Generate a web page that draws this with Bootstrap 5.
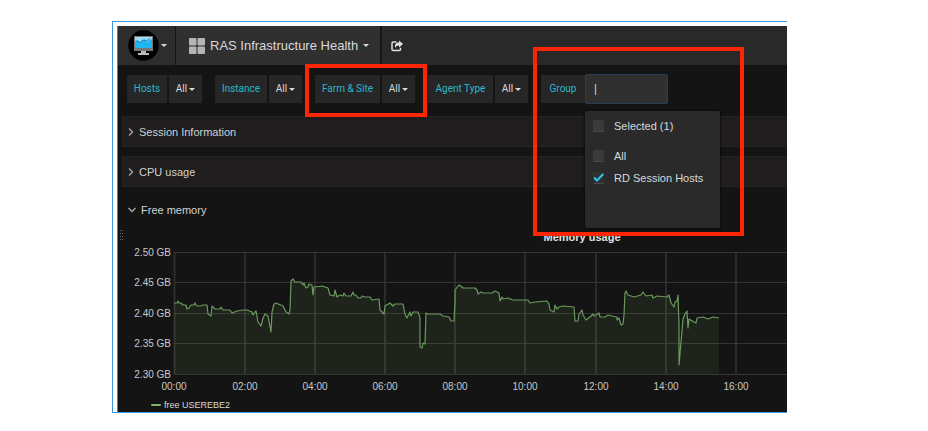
<!DOCTYPE html>
<html lang="en">
<head>
<meta charset="utf-8">
<meta name="viewport" content="width=device-width, initial-scale=1">
<title>RAS Infrastructure Health</title>
<link href="https://cdn.jsdelivr.net/npm/bootstrap@5.3.0/dist/css/bootstrap.min.css" rel="stylesheet">
<style>
body{background:#fff;font-family:"Liberation Sans",Arial,sans-serif;font-size:11px;line-height:16px;color:#d2d3d4}
.page-shell{padding:21px 141px 18px 112px}
.shot-frame{border:solid #3d96dc;border-width:1px 0 1px 1px;padding:4px 0 0 4px}
.dash{background:#141414;border-left:1px solid #777;overflow:hidden}
.topbar{height:39px;background:#292929}
.topbar button{border:0;color:#d8d9da;padding:0}
.brand-btn{width:58px;background:#2d2d2d;border-right:1px solid #141414!important;padding-left:10px!important;gap:2px}
.title-btn{width:206px;background:#303030;border-right:2px solid #161616!important;font-size:13px;gap:5px;padding-left:13px!important}
.share-btn{width:30px;background:transparent}
.caret{width:0;height:0;border:solid transparent;border-width:3px 3px 0;border-top-color:#d8d9da;flex:none}
.caret.tiny{border-width:3px 3px 0;border-top-color:#d8d9da}
.filters{padding:10px 8px 12px 9px;height:51px;gap:13px;font-family:Roboto,sans-serif;font-size:10px}
.flt{gap:2px;height:28px}
.flt label,.flt button{background:#262626;display:flex;align-items:center;justify-content:center;height:28px}
.flt label{color:#2ab9ca}
.flt button{border:0;color:#d8d9da;width:33px;gap:2px;padding:0;font-size:10px}
.w-a{width:40px}.w-b{width:52px}.w-c{width:65px}.w-d{width:44px}
.callout{position:absolute;border:4px solid #fc2605;pointer-events:none;z-index:6}
.callout-site{inset:-11px -12px -14px -10px}
.callout-group{left:-8px;top:-28px;width:211px;height:189px}
.group-input{width:83px;height:30px;margin-top:-1px;background:#303030;border:1px solid #24405a;border-radius:2px;color:#d8d9da;padding:0 8px;font-size:12px;outline:0}
.menu-pop{position:absolute;left:44px;top:36px;width:135px;height:117px;background:#2a2a2a;border-radius:2px;z-index:5;padding:7px 8px;font-family:"Liberation Sans",Arial,sans-serif;font-size:11px;box-shadow:0 0 3px #000}
.menu-pop .opt{display:flex;align-items:center;gap:10px;height:16px;background:none;color:#d8d9da}
.menu-pop label{display:block;background:none;color:#d8d9da;height:16px;white-space:nowrap}
.menu-pop input{appearance:none;margin:0;width:11px;height:12px;background:#3a3a3c;border-bottom:1px solid #4b4b4b;border-radius:1px;flex:none}
.menu-pop input:checked{background:#303030 url("data:image/svg+xml,%3Csvg xmlns='http://www.w3.org/2000/svg' viewBox='0 0 11 11'%3E%3Cpath d='M1 5.5l3 3L10.300 2' fill='none' stroke='%2333c5e8' stroke-width='2'/%3E%3C/svg%3E")}
.opt-all{margin-top:14px}.opt-rd{margin-top:6px}
.sections{gap:9px}
.sec{margin-left:4px;height:31px;background:#1f1d1d;border:1px solid #252323;border-right:0;color:#d2d3d4;padding:0 5px;gap:5px;text-align:left;font-size:11px}
.sec-open{background:transparent;border-color:transparent;height:28px;gap:5px}
.sec svg{flex:none}
.chart{display:block;width:100%;height:188px}
.chart text{font-size:10px;fill:#c8c9ca}
.chart .cap{font-size:11px;font-weight:bold;fill:#e0e0e0}
.chart .key{font-size:9px;fill:#d8d9da}
</style>
<script src="https://cdn.jsdelivr.net/npm/bootstrap@5.3.0/dist/js/bootstrap.bundle.min.js"></script>
</head>
<body>
<main class="page-shell">
<div class="shot-frame"><div class="dash">
  <nav class="topbar d-flex" aria-label="Dashboard">
    <button class="brand-btn d-flex align-items-center" aria-label="Main menu">
      <svg width="31" height="31" viewBox="0 0 31 31"><circle cx="15.500" cy="15.500" r="15.200" fill="#000"/><path d="M6 6h19v15H6z" fill="#777"/><path d="M7 7h17v11H7z" fill="#1fb6f2"/><path d="M7 7h17v2l-3 1-2 2-2-3-3 1-2 2-2-2-3 1z" fill="#9edcf7"/><path d="M8 12l2-1 2 2 3-3 2 1 3-1 2-2" fill="none" stroke="#2787b8"/><path d="M13 21h5v2h3v2H10v-2h3z" fill="#bbb"/></svg>
      <span class="caret tiny"></span>
    </button>
    <button class="title-btn d-flex align-items-center">
      <svg width="16" height="16" viewBox="0 0 16 16" fill="#b5b5b5"><rect width="7.500" height="7.500" rx="1"/><rect x="8.500" width="7.500" height="7.500" rx="1"/><rect y="8.500" width="7.500" height="7.500" rx="1"/><rect x="8.500" y="8.500" width="7.500" height="7.500" rx="1"/></svg>
      <span class="text-nowrap">RAS Infrastructure Health</span><span class="caret"></span>
    </button>
    <button class="share-btn d-flex align-items-center justify-content-center" aria-label="Share">
      <svg width="12" height="12" viewBox="0 0 12 12"><path d="M5.500 2H2.300Q1 2 1 3.300v6Q1 10.600 2.300 10.600h5.900q1.300 0 1.300-1.300V7.800" fill="none" stroke="#e0e0e0" stroke-width="1.500"/><path d="M8 .5L12 4 8 7.500v-2C5.800 5.500 5 6.200 4.500 8 3 4.500 5 2.600 8 2.600z" fill="#e0e0e0"/></svg>
    </button>
  </nav>
  <div class="filters d-flex">
    <div class="flt d-flex"><label class="w-a" for="f1">Hosts</label><button id="f1">All<span class="caret tiny"></span></button></div>
    <div class="flt d-flex"><label class="w-b" for="f2">Instance</label><button id="f2">All<span class="caret tiny"></span></button></div>
    <div class="flt d-flex position-relative"><label class="w-c" for="f3">Farm &amp; Site</label><button id="f3">All<span class="caret tiny"></span></button><span class="callout callout-site"></span></div>
    <div class="flt d-flex"><label class="w-c" for="f4">Agent Type</label><button id="f4">All<span class="caret tiny"></span></button></div>
    <div class="flt d-flex gap-0 position-relative"><label class="w-d" for="f5">Group</label><input class="group-input" id="f5" type="text" value="|">
      <div class="menu-pop">
        <div class="opt"><input type="checkbox" id="o1"><label for="o1">Selected (1)</label></div>
        <div class="opt opt-all"><input type="checkbox" id="o2"><label for="o2">All</label></div>
        <div class="opt opt-rd"><input type="checkbox" id="o3" checked><label for="o3">RD Session Hosts</label></div>
      </div>
      <span class="callout callout-group"></span>
    </div>
  </div>
  <div class="sections d-flex flex-column">
    <button class="sec d-flex align-items-center"><svg width="6" height="8" viewBox="0 0 6 8"><path d="M1 .5L4.500 4 1 7.500" fill="none" stroke="#aaa" stroke-width="1.300"/></svg>Session Information</button>
    <button class="sec d-flex align-items-center"><svg width="6" height="8" viewBox="0 0 6 8"><path d="M1 .5L4.500 4 1 7.500" fill="none" stroke="#aaa" stroke-width="1.300"/></svg>CPU usage</button>
    <button class="sec sec-open d-flex align-items-center"><svg width="8" height="6" viewBox="0 0 8 6"><path d="M.5 1L4 4.500 7.500 1" fill="none" stroke="#aaa" stroke-width="1.300"/></svg>Free memory</button>
  </div>
  <svg class="chart" role="img" aria-label="Memory usage">
    <path d="M2 6.500h1M2 9.500h1M2 12.500h1M2 15.500h1M4 6.500h1M4 9.500h1M4 12.500h1M4 15.500h1" stroke="#666"/>
    <text class="cap" x="464" y="17" text-anchor="middle">Memory usage</text>
    <g stroke="#343434"><path d="M56.500 28v122M127 28v122M197 28v122M267 28v122M337 28v122M407 28v122M478 28v122M548 28v122M618 28v122" fill="none" stroke="#2c2c2c" stroke-width="2"/>
      <line x1="56" x2="100%" y1="28.500" y2="28.500"/><line x1="56" x2="100%" y1="58.500" y2="58.500"/><line x1="56" x2="100%" y1="89.500" y2="89.500"/><line x1="56" x2="100%" y1="119.500" y2="119.500"/><line x1="56" x2="100%" y1="150.500" y2="150.500"/></g>
    <g transform="translate(56 28)">
      <path id="area" fill="#7eb26d" fill-opacity=".1"/>
      <path id="line" fill="none" stroke="#6a9a5c" stroke-width="1.200" stroke-linejoin="round"/>
    </g>
    <g text-anchor="end"><text x="53" y="32">2.50 GB</text><text x="53" y="62">2.45 GB</text><text x="53" y="93">2.40 GB</text><text x="53" y="123">2.35 GB</text><text x="53" y="154">2.30 GB</text></g>
    <g text-anchor="middle"><text x="56" y="166">00:00</text><text x="127" y="166">02:00</text><text x="197" y="166">04:00</text><text x="267" y="166">06:00</text><text x="337" y="166">08:00</text><text x="407" y="166">10:00</text><text x="478" y="166">12:00</text><text x="548" y="166">14:00</text><text x="618" y="166">16:00</text></g>
    <rect x="33" y="180" width="10" height="2" rx="1" fill="#7eb26d"/><text class="key" x="46" y="184">free USEREBE2</text>
  </svg>
</div></div>
</main>
<script>
const samples="0,51 3,51 4,49 5,51 7,51 9,53 12,53 13,57 15,56 17,53 20,53 21,51 23,54 27,54 29,53 33,53 34,62 37,64 38,54 41,57 46,57 47,55 49,58 56,58 58,61 63,59 69,58 73,58 78,60 79,63 81,60 82,59 84,70 87,74 89,66 91,62 94,64 97,80 98,60 100,52 102,51 109,54 112,60 115,62 116,58 117,29 119,27 121,30 127,30 129,33 130,31 132,36 134,35 135,32 138,33 139,43 140,35 148,34 154,36 156,43 160,44 161,38 163,45 166,43 169,44 170,41 172,44 177,44 179,40 180,43 182,43 184,46 187,46 188,44 191,45 196,45 198,48 205,47 206,58 208,60 210,62 211,54 216,51 219,54 221,52 229,52 231,62 233,66 236,60 237,64 239,60 244,60 246,66 246,95 248,96 249,91 251,92 252,61 254,62 266,62 269,64 275,65 277,69 280,69 281,50 281,38 285,33 288,35 289,36 301,36 303,38 304,42 307,40 309,41 318,41 321,39 325,41 326,49 328,45 329,47 334,46 339,48 348,48 354,48 356,51 361,50 373,49 375,52 376,58 380,60 381,53 383,57 385,55 389,54 400,55 401,69 404,69 405,62 408,58 409,63 412,68 416,65 419,62 420,64 425,61 426,65 431,65 434,63 438,64 443,65 443,68 445,66 447,73 449,72 450,63 451,41 452,39 454,43 460,45 467,43 469,40 472,44 478,43 479,46 483,44 493,45 495,43 497,51 500,55 501,50 503,49 504,43 505,73 505,113 509,67 511,62 513,59 514,76 515,67 520,70 522,71 523,66 529,65 534,67 539,65 545,66";
const trace="M"+samples.replace(/ /g,"L");
document.getElementById("line").setAttribute("d",trace);
document.getElementById("area").setAttribute("d",trace+"V122H0Z");
</script>
</body>
</html>
